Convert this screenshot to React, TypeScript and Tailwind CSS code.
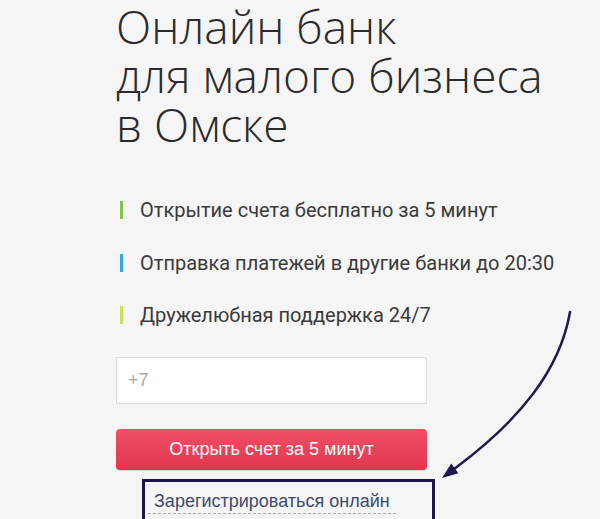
import React from "react";

const features = [
  { text: "Открытие счета бесплатно за 5 минут", color: "bg-[#8cc152]" },
  { text: "Отправка платежей в другие банки до 20:30", color: "bg-[#2fa8e0]" },
  { text: "Дружелюбная поддержка 24/7", color: "bg-[#c9e05a]" },
];

export default function App() {
  return (
    <div className="relative w-full h-[519px] overflow-hidden bg-[#f5f5f5]">
      <div className="pl-[116px] pt-[2px] flex flex-col">
        <h1 className="text-[46px] leading-[49px] font-light text-[#2b2b2b] font-['Open_Sans',sans-serif]">
          Онлайн банк
          <br />
          для малого бизнеса
          <br />в Омске
        </h1>

        <ul className="mt-[35px] flex flex-col font-['Roboto',sans-serif]">
          {features.map((f) => (
            <li key={f.text} className="h-[52.5px] flex items-center">
              <span className={`ml-[4px] w-[3px] h-[18px] ${f.color}`} />
              <span className="ml-[17px] text-[20px] leading-[52px] text-[#3a3a3a]">{f.text}</span>
            </li>
          ))}
        </ul>

        <div className="mt-[15px] w-[311px] h-[47px] bg-white border border-[#dcdcdc] flex items-center pl-[11px] text-[18px] text-[#a8a8a8] font-['Liberation_Sans',Arial,sans-serif]">
          +7
        </div>

        <button className="mt-[25px] w-[311px] h-[41px] rounded-[4px] bg-gradient-to-b from-[#ef5068] to-[#e2344f] text-white text-[18px] flex items-center justify-center shadow-[0_1px_1px_rgba(0,0,0,0.15)] font-['Liberation_Sans',Arial,sans-serif]">
          Открыть счет за 5 минут
        </button>

        <div className="ml-[26px] mt-[9px] w-[293px] h-[48px] border-[3px] border-[#1b1646] flex items-start pt-[8px] pl-[3px]">
          <span className="px-[6px] text-[18px] leading-[23px] text-[#3d4b6b] border-b border-dashed border-[#a3a8b4] font-['Liberation_Sans',Arial,sans-serif]">
            Зарегистрироваться онлайн
          </span>
        </div>
      </div>

      <svg className="absolute inset-0 pointer-events-none" width="600" height="519" viewBox="0 0 600 519">
        <path d="M570 312 C 560 370, 520 420, 454.8 468.4" fill="none" stroke="#1c1a4e" strokeWidth="2.5" strokeLinecap="round" />
        <polygon points="442,478 458.4,473.2 451.2,463.6" fill="#1c1a4e" />
      </svg>
    </div>
  );
}
